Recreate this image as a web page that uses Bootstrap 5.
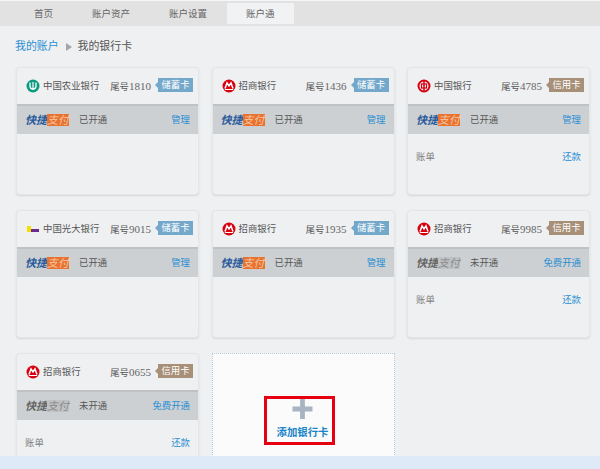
<!DOCTYPE html>
<html lang="zh">
<head>
<meta charset="utf-8">
<title>我的银行卡</title>
<link rel="stylesheet" href="https://cdn.jsdelivr.net/npm/bootstrap@5.3.0/dist/css/bootstrap.min.css">
<style>
html,body{height:100%;}
body{background:#eff0f2;font-family:"Liberation Sans","Noto Sans CJK SC",sans-serif;font-size:9.4px;color:#555;overflow:hidden;}
a{text-decoration:none;color:#2a8fd2;}
.shell{height:469px;border-top:1px solid #f6f6f6;}
.stage{min-height:0;overflow:hidden;}
.topbar{height:25px;background:#e2e2e2;padding:2px 0 2px 14.5px;flex:none;}
.topbar .nav-link{padding:0 19.5px;height:21px;line-height:21px;font-size:9.5px;color:#666;}
.topbar .nav-link.active{background:#f1f2f4;}
.crumbs{padding:0 0 0 15px;height:41px;font-size:10.9px;line-height:15px;}
.crumbs i{width:0;height:0;border-left:6px solid #a3a6aa;border-top:4px solid transparent;border-bottom:4px solid transparent;margin:0 6px 0 7px;}
.deck{grid-template-columns:repeat(3,183px);column-gap:12.5px;row-gap:15.5px;padding-left:16px;}
.bcard{height:127.5px;background:#eff0f2;border:1px solid #e4e5e7;border-radius:4px;box-shadow:0 1px 2px #d6d7d9;overflow:hidden;}
.bhead{height:36px;padding:0 5px 0 9px;}
.bhead svg{width:14px;height:14px;margin-right:3px;flex:none;}
.bname{flex:1;white-space:nowrap;}
.tail{margin-right:7px;white-space:nowrap;font-size:9.4px;}
.tail b{font-weight:400;font-family:"Liberation Serif","Noto Sans CJK SC",serif;font-size:11px;color:#666;}
.tag{position:relative;width:35px;height:14px;line-height:14px;text-align:center;color:#fff;font-size:9.4px;margin-top:-2px;}
.tag::before{content:"";position:absolute;left:-3px;top:4px;border-right:3px solid;border-top:3px solid transparent;border-bottom:3px solid transparent;border-right-color:inherit;}
.tag-d{background:#74a8cb;border-color:#74a8cb;}
.tag-c{background:#a78f78;border-color:#a78f78;}
.band{height:30px;background:#cdd0d3;border-top:2px solid #bfc2c5;padding:0 8px;}
.paylogo{width:44px;margin-right:10px;font-size:11px;font-weight:700;font-style:italic;line-height:12px;white-space:nowrap;color:#2a5c9c;}
.paylogo span{display:inline-block;background:#e8722e;color:#f5c6a5;font-weight:400;}
.paylogo.off{color:#666;}
.paylogo.off span{background:#bfc1c3;color:#8a8a8a;}
.bill{height:46px;padding:0 8px;color:#808080;}
.addcard{height:127.5px;background:#fbfbfb;border:1px dotted #b5c9da;border-bottom:0;padding-top:42px;}
.addbox{width:71px;height:49px;margin-left:51px;padding:0 0 2px 7px;border:3px solid #e60012;color:#1a84c8;font-weight:700;font-size:10.4px;line-height:14px;}
.addbox svg{width:21px;height:21px;margin-bottom:7px;display:block;}
.footband{height:13px;background:#deeaf8;flex:none;}
</style>
</head>
<body>
<svg width="0" height="0" class="d-none">
<symbol id="cmb" viewBox="0 0 14 14"><circle cx="7" cy="7" r="6.5" fill="#d8000f"/><path d="M3 9.500 5 4l2 3 2-3 2 5.500" fill="none" stroke="#fff" stroke-width="1.500"/><path d="M2.800 10.500h8.400" stroke="#fff" stroke-width="1"/></symbol>
<symbol id="abc" viewBox="0 0 14 14"><circle cx="7" cy="7" r="6.500" fill="#0c9b80"/><path d="M4 3.500v3.500c0 2 1.300 3 3 3s3-1 3-3V3.500" fill="none" stroke="#fff" stroke-width="1.300"/><path d="M7 3v8" stroke="#fff" stroke-width="1.200"/></symbol>
<symbol id="boc" viewBox="0 0 14 14"><circle cx="7" cy="7" r="5.500" fill="none" stroke="#d8000f" stroke-width="2"/><rect x="4.500" y="5" width="5" height="4" fill="none" stroke="#d8000f" stroke-width="1.200"/><path d="M7 1v12" stroke="#d8000f" stroke-width="1.500"/></symbol>
<symbol id="ceb" viewBox="0 0 14 14"><rect x="1" y="4" width="4" height="6" fill="#f3e000"/><rect x="5" y="7" width="8" height="3" fill="#6b2a90"/></symbol>
</svg>
<div class="shell d-flex flex-column">
<div class="stage flex-grow-1">
<ul class="nav topbar">
<li class="nav-item"><a class="nav-link" href="#">首页</a></li>
<li class="nav-item"><a class="nav-link" href="#">账户资产</a></li>
<li class="nav-item"><a class="nav-link" href="#">账户设置</a></li>
<li class="nav-item"><a class="nav-link active" href="#">账户通</a></li>
</ul>
<div class="crumbs d-flex align-items-center"><a href="#">我的账户</a><i class="d-block"></i><span>我的银行卡</span></div>
<div class="deck d-grid">

<div class="bcard">
<div class="bhead d-flex align-items-center"><svg><use href="#abc"/></svg><span class="bname">中国农业银行</span><span class="tail">尾号<b>1810</b></span><span class="tag tag-d">储蓄卡</span></div>
<div class="band d-flex align-items-center"><span class="paylogo">快捷<span>支付</span></span><span class="flex-grow-1">已开通</span><a href="#">管理</a></div>
</div>

<div class="bcard">
<div class="bhead d-flex align-items-center"><svg><use href="#cmb"/></svg><span class="bname">招商银行</span><span class="tail">尾号<b>1436</b></span><span class="tag tag-d">储蓄卡</span></div>
<div class="band d-flex align-items-center"><span class="paylogo">快捷<span>支付</span></span><span class="flex-grow-1">已开通</span><a href="#">管理</a></div>
</div>

<div class="bcard">
<div class="bhead d-flex align-items-center"><svg><use href="#boc"/></svg><span class="bname">中国银行</span><span class="tail">尾号<b>4785</b></span><span class="tag tag-c">信用卡</span></div>
<div class="band d-flex align-items-center"><span class="paylogo">快捷<span>支付</span></span><span class="flex-grow-1">已开通</span><a href="#">管理</a></div>
<div class="bill d-flex align-items-center justify-content-between"><span>账单</span><a href="#">还款</a></div>
</div>

<div class="bcard">
<div class="bhead d-flex align-items-center"><svg><use href="#ceb"/></svg><span class="bname">中国光大银行</span><span class="tail">尾号<b>9015</b></span><span class="tag tag-d">储蓄卡</span></div>
<div class="band d-flex align-items-center"><span class="paylogo">快捷<span>支付</span></span><span class="flex-grow-1">已开通</span><a href="#">管理</a></div>
</div>

<div class="bcard">
<div class="bhead d-flex align-items-center"><svg><use href="#cmb"/></svg><span class="bname">招商银行</span><span class="tail">尾号<b>1935</b></span><span class="tag tag-d">储蓄卡</span></div>
<div class="band d-flex align-items-center"><span class="paylogo">快捷<span>支付</span></span><span class="flex-grow-1">已开通</span><a href="#">管理</a></div>
</div>

<div class="bcard">
<div class="bhead d-flex align-items-center"><svg><use href="#cmb"/></svg><span class="bname">招商银行</span><span class="tail">尾号<b>9985</b></span><span class="tag tag-c">信用卡</span></div>
<div class="band d-flex align-items-center"><span class="paylogo off">快捷<span>支付</span></span><span class="flex-grow-1">未开通</span><a href="#">免费开通</a></div>
<div class="bill d-flex align-items-center justify-content-between"><span>账单</span><a href="#">还款</a></div>
</div>

<div class="bcard">
<div class="bhead d-flex align-items-center"><svg><use href="#cmb"/></svg><span class="bname">招商银行</span><span class="tail">尾号<b>0655</b></span><span class="tag tag-c">信用卡</span></div>
<div class="band d-flex align-items-center"><span class="paylogo off">快捷<span>支付</span></span><span class="flex-grow-1">未开通</span><a href="#">免费开通</a></div>
<div class="bill d-flex align-items-center justify-content-between"><span>账单</span><a href="#">还款</a></div>
</div>

<div class="addcard">
<a class="addbox d-flex flex-column align-items-center justify-content-end" href="#"><svg viewBox="0 0 21 21"><path d="M8 0h5v8h8v5h-8v8H8v-8H0V8h8z" fill="#a9b4c2"/></svg>添加银行卡</a>
</div>

</div>
</div>
<div class="footband"></div>
</div>
<script src="https://cdn.jsdelivr.net/npm/bootstrap@5.3.0/dist/js/bootstrap.bundle.min.js"></script>
</body>
</html>
